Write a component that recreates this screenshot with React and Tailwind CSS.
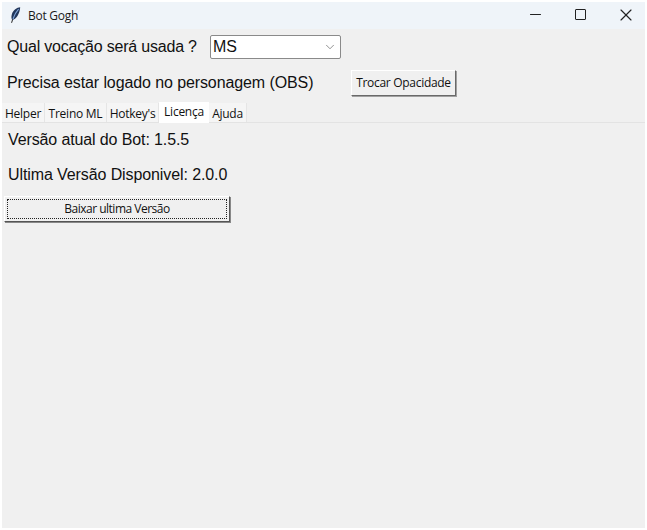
import React from 'react';
import { Minus, X, ChevronDown } from 'lucide-react';

const sans = "font-['Liberation_Sans',Arial,sans-serif]";
const ui = "font-['Open_Sans','Noto_Sans',sans-serif]";

const tabs = [
    { label: 'Helper', width: 'w-[43px]' },
    { label: 'Treino ML', width: 'w-[62px]' },
    { label: "Hotkey's", width: 'w-[52px]' },
    { label: 'Licença', width: 'w-[50px]', active: true },
    { label: 'Ajuda', width: 'w-[38px]' },
];

const Feather = () => (
    <svg width="12" height="18" viewBox="0 0 12 18" className="ml-[7px]">
        <path d="M11.2 0.3C8 0.4 4 3 2.8 7.5C2.1 10 2.4 12 3.3 13C7 12.5 10.8 7 11.2 0.3Z" fill="#22375c" />
        <path d="M9.6 2.2C7.4 4.6 5.4 8 4 12" stroke="#7fa4d8" strokeWidth="1.1" fill="none" />
        <path d="M3.6 12.5L2.6 15.8" stroke="#222" strokeWidth="1" fill="none" />
    </svg>
);

const App = () => {
    return (
        <div className="w-[647px] h-[530px] bg-white p-[2px] overflow-hidden">
            <div className="w-[643px] h-[526px] bg-[#f0f0f0] flex flex-col">
                {/* Title bar */}
                <div className="h-[27px] shrink-0 bg-[#eff4f9] flex items-center">
                    <Feather />
                    <span className={`${ui} text-[12px] tracking-[-0.25px] ml-[7px] text-[#1a1a1a]`}>Bot Gogh</span>
                    <div className="ml-auto flex items-center text-[#222] -mt-[2px]">
                        <Minus size={17} strokeWidth={1.7} className="mr-[31px]" />
                        <span className="w-[11px] h-[11px] border border-[#222] rounded-[1px] mr-[30px]" />
                        <X size={20} strokeWidth={1.4} className="mr-[9px]" />
                    </div>
                </div>

                {/* Vocation row */}
                <div className="h-[34px] shrink-0 flex items-center pt-[2px] pl-[5px]">
                    <span className={`${sans} text-[16px] tracking-[-0.2px] text-[#111] w-[203px]`}>Qual vocação será usada ?</span>
                    <div className="w-[131px] h-[24px] bg-white border border-[#8a8a8a] rounded-[2px] flex items-center justify-between pl-[2px] pr-[3px]">
                        <span className={`${sans} text-[16px] text-[#111]`}>MS</span>
                        <ChevronDown size={14} strokeWidth={1} className="text-[#444]" />
                    </div>
                </div>

                {/* Login hint row */}
                <div className="h-[38px] shrink-0 flex items-center pt-[2px] pl-[5px]">
                    <span className={`${sans} text-[16px] tracking-[-0.1px] text-[#111] w-[344px]`}>Precisa estar logado no personagem (OBS)</span>
                    <button className={`${ui} w-[105px] h-[26px] bg-[#f0f0f0] text-[12px] tracking-[-0.3px] text-[#111] border border-[#fff] border-r-[#696969] border-b-[#696969] shadow-[1px_1px_0_#a0a0a0]`}>
                        Trocar Opacidade
                    </button>
                </div>

                {/* Tabs */}
                <div className="h-[21px] shrink-0 flex items-end border-b border-[#e3e3e3] mt-[1px]">
                    {tabs.map((tab) => (
                        <div
                            key={tab.label}
                            className={`${ui} ${tab.width} flex items-center justify-center text-[12px] tracking-[-0.25px] text-[#111] border-[#e5e5e5] ${
                                tab.active ? 'h-[21px] bg-white pb-[1px] -mb-[1px]' : 'h-[19px] bg-[#f5f5f5] border-r pt-[2px]'
                            }`}
                        >
                            {tab.label}
                        </div>
                    ))}
                </div>

                {/* License tab */}
                <div className="flex flex-col pl-[6px]">
                    <p className={`${sans} text-[16px] tracking-[-0.12px] text-[#111] mt-[7px] leading-[20px]`}>Versão atual do Bot: 1.5.5</p>
                    <p className={`${sans} text-[16px] tracking-[-0.1px] text-[#111] mt-[15px] leading-[20px]`}>Ultima Versão Disponivel: 2.0.0</p>
                    <button className={`${ui} -ml-[4px] mt-[11px] w-[226px] h-[26px] bg-[#f0f0f0] text-[12px] tracking-[-0.5px] text-[#111] border border-[#fff] border-r-[#555] border-b-[#555] p-[2px] shadow-[1px_1px_0_#888]`}>
                        <span className="flex items-center justify-center w-full h-full border border-dotted border-[#222]">
                            Baixar ultima Versão
                        </span>
                    </button>
                </div>
            </div>
        </div>
    );
};

export default App;
